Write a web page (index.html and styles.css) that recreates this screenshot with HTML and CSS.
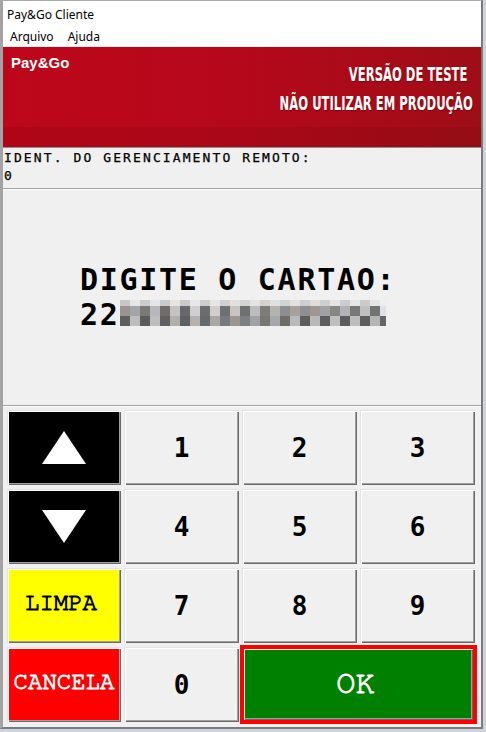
FILE: index.html
```html
<!DOCTYPE html>
<html lang="pt">
<head>
<meta charset="utf-8">
<title>Pay&amp;Go Cliente</title>
<link rel="stylesheet" href="styles.css">
</head>
<body>
<div class="window">
  <div class="titlebar">Pay&amp;Go Cliente</div>
  <div class="menubar"><span class="menu-item">Arquivo</span><span class="menu-item">Ajuda</span></div>
  <div class="banner">
    <div class="brand">Pay&amp;Go</div>
    <div class="warning">
      <div class="warn-line warn-1">VERSÃO DE TESTE</div>
      <div class="warn-line warn-2">NÃO UTILIZAR EM PRODUÇÃO</div>
    </div>
  </div>
  <div class="ident">
    <div>IDENT. DO GERENCIAMENTO REMOTO:</div>
    <div>0</div>
  </div>
  <div class="display">
    <div class="prompt">DIGITE O CARTAO:</div>
    <div class="prompt card">22<svg class="mosaic" width="266" height="26" viewBox="0 0 266 26">
      <g>
        <rect x="0" y="0" width="10" height="6" fill="#c9c6c4"/><rect x="10" y="0" width="10" height="6" fill="#e6e6e6"/>
        <rect x="20" y="0" width="10" height="6" fill="#cccccc"/><rect x="30" y="0" width="10" height="6" fill="#e4e5e7"/>
        <rect x="40" y="0" width="10" height="6" fill="#cbcbcb"/><rect x="50" y="0" width="10" height="6" fill="#e6e4e2"/>
        <rect x="60" y="0" width="10" height="6" fill="#cacaca"/><rect x="70" y="0" width="10" height="6" fill="#e8e8e8"/>
        <rect x="80" y="0" width="10" height="6" fill="#cdcdcd"/><rect x="90" y="0" width="10" height="6" fill="#e5e5e5"/>
        <rect x="100" y="0" width="10" height="6" fill="#d0d0d0"/><rect x="110" y="0" width="10" height="6" fill="#e2e0df"/>
        <rect x="120" y="0" width="10" height="6" fill="#d4d4d4"/><rect x="130" y="0" width="10" height="6" fill="#e3e3e3"/>
        <rect x="140" y="0" width="10" height="6" fill="#d4d2d0"/><rect x="150" y="0" width="10" height="6" fill="#e0e0e0"/>
        <rect x="160" y="0" width="10" height="6" fill="#d2d3d5"/><rect x="170" y="0" width="10" height="6" fill="#e3dfdc"/>
        <rect x="180" y="0" width="10" height="6" fill="#cfcfd1"/><rect x="190" y="0" width="10" height="6" fill="#e2dcd9"/>
        <rect x="200" y="0" width="10" height="6" fill="#cdcfd1"/><rect x="210" y="0" width="10" height="6" fill="#e4e4e4"/>
        <rect x="220" y="0" width="10" height="6" fill="#cccdcf"/><rect x="230" y="0" width="10" height="6" fill="#e6e6e6"/>
        <rect x="240" y="0" width="10" height="6" fill="#cbcbcb"/><rect x="250" y="0" width="10" height="6" fill="#e5e5e5"/>
        <rect x="260" y="0" width="6" height="6" fill="#eceef0"/>
      </g>
      <g>
        <rect x="0" y="6" width="10" height="10" fill="#9b938f"/><rect x="10" y="6" width="10" height="10" fill="#a2a5a9"/>
        <rect x="20" y="6" width="10" height="10" fill="#7b7876"/><rect x="30" y="6" width="10" height="10" fill="#b5b8bc"/>
        <rect x="40" y="6" width="10" height="10" fill="#6f6c6b"/><rect x="50" y="6" width="10" height="10" fill="#c5c3c1"/>
        <rect x="60" y="6" width="10" height="10" fill="#68686a"/><rect x="70" y="6" width="10" height="10" fill="#cfcfcf"/>
        <rect x="80" y="6" width="10" height="10" fill="#6b6c6f"/><rect x="90" y="6" width="10" height="10" fill="#d0cfce"/>
        <rect x="100" y="6" width="10" height="10" fill="#707074"/><rect x="110" y="6" width="10" height="10" fill="#c9c4c2"/>
        <rect x="120" y="6" width="10" height="10" fill="#6e7072"/><rect x="130" y="6" width="10" height="10" fill="#bdbdbd"/>
        <rect x="140" y="6" width="10" height="10" fill="#7e7c79"/><rect x="150" y="6" width="10" height="10" fill="#b5b3b0"/>
        <rect x="160" y="6" width="10" height="10" fill="#8d8e92"/><rect x="170" y="6" width="10" height="10" fill="#a8a09b"/>
        <rect x="180" y="6" width="10" height="10" fill="#8e8f93"/><rect x="190" y="6" width="10" height="10" fill="#a09590"/>
        <rect x="200" y="6" width="10" height="10" fill="#9fa3a7"/><rect x="210" y="6" width="10" height="10" fill="#888583"/>
        <rect x="220" y="6" width="10" height="10" fill="#b0b2b6"/><rect x="230" y="6" width="10" height="10" fill="#7a7877"/>
        <rect x="240" y="6" width="10" height="10" fill="#c0c0c0"/><rect x="250" y="6" width="10" height="10" fill="#737373"/>
        <rect x="260" y="6" width="6" height="10" fill="#dee2e6"/>
      </g>
      <g>
        <rect x="0" y="16" width="10" height="10" fill="#5f5f5f"/><rect x="10" y="16" width="10" height="10" fill="#bdbdbd"/>
        <rect x="20" y="16" width="10" height="10" fill="#5c5c5c"/><rect x="30" y="16" width="10" height="10" fill="#bdbdbd"/>
        <rect x="40" y="16" width="10" height="10" fill="#606062"/><rect x="50" y="16" width="10" height="10" fill="#b2aeaa"/>
        <rect x="60" y="16" width="10" height="10" fill="#5d6064"/><rect x="70" y="16" width="10" height="10" fill="#b5b1ae"/>
        <rect x="80" y="16" width="10" height="10" fill="#68696c"/><rect x="90" y="16" width="10" height="10" fill="#aba7a3"/>
        <rect x="100" y="16" width="10" height="10" fill="#777a7e"/><rect x="110" y="16" width="10" height="10" fill="#9c9590"/>
        <rect x="120" y="16" width="10" height="10" fill="#7e7f83"/><rect x="130" y="16" width="10" height="10" fill="#9fa2a7"/>
        <rect x="140" y="16" width="10" height="10" fill="#7a7672"/><rect x="150" y="16" width="10" height="10" fill="#a5a7ab"/>
        <rect x="160" y="16" width="10" height="10" fill="#6e6d6b"/><rect x="170" y="16" width="10" height="10" fill="#b7b9bc"/>
        <rect x="180" y="16" width="10" height="10" fill="#5f5e5d"/><rect x="190" y="16" width="10" height="10" fill="#b9b9b9"/>
        <rect x="200" y="16" width="10" height="10" fill="#5d5d5d"/><rect x="210" y="16" width="10" height="10" fill="#bfbfbf"/>
        <rect x="220" y="16" width="10" height="10" fill="#5c5c5c"/><rect x="230" y="16" width="10" height="10" fill="#bdbdbd"/>
        <rect x="240" y="16" width="10" height="10" fill="#5e5e5e"/><rect x="250" y="16" width="10" height="10" fill="#b5b5b5"/>
        <rect x="260" y="16" width="6" height="10" fill="#63666a"/>
      </g>
    </svg></div>
  </div>
  <div class="keypad">
    <div class="key key-dark"><svg width="44" height="33" viewBox="0 0 44 33"><polygon points="22,0 44,33 0,33" fill="#fff"/></svg></div>
    <div class="key">1</div>
    <div class="key">2</div>
    <div class="key">3</div>
    <div class="key key-dark"><svg width="44" height="33" viewBox="0 0 44 33"><polygon points="0,0 44,0 22,33" fill="#fff"/></svg></div>
    <div class="key">4</div>
    <div class="key">5</div>
    <div class="key">6</div>
    <div class="key key-word key-yellow">LIMPA</div>
    <div class="key">7</div>
    <div class="key">8</div>
    <div class="key">9</div>
    <div class="key key-word key-red">CANCELA</div>
    <div class="key">0</div>
    <div class="key key-word key-ok">OK</div>
  </div>
</div>
</body>
</html>
```

FILE: styles.css
```css
html, body {
  margin: 0;
  padding: 0;
}

body {
  background: #cdd4de;
  width: 486px;
  height: 732px;
  overflow: hidden;
}

.window {
  width: 478px;
  border-top: 1px solid #a9a9a9;
  border-left: 3px solid #a3a3a3;
  border-right: 2px solid #7b7b7b;
  border-bottom: 2px solid #7b7b7b;
  background: #f0f0f0;
}

.titlebar {
  height: 27px;
  line-height: 27px;
  padding-left: 4px;
  background: #fff;
  font-family: "Noto Sans", "Open Sans", sans-serif;
  font-size: 12px;
  color: #000;
}

.menubar {
  height: 18px;
  line-height: 18px;
  padding-left: 7px;
  background: #fff;
  border-bottom: 1px solid #f0f0f0;
  font-family: "Noto Sans", "Open Sans", sans-serif;
  font-size: 12px;
  color: #000;
  display: flex;
  gap: 14px;
}

.banner {
  height: 100px;
  display: flex;
  justify-content: space-between;
  align-items: flex-start;
  background:
    linear-gradient(to bottom, rgba(0, 0, 0, 0) 80px, rgba(60, 0, 0, 0.1) 80px),
    linear-gradient(to right, #bd0619 0%, #b7081b 45%, #a80b18 80%, #9e0e17 100%);
  border-bottom: 1px solid #8d8d8d;
}

.brand {
  padding: 8px 0 0 8px;
  font-family: "Liberation Sans", Arial, sans-serif;
  font-weight: bold;
  font-size: 15px;
  line-height: 15px;
  color: #fff;
}

.warning {
  padding: 13px 8px 0 0;
  display: flex;
  flex-direction: column;
  align-items: flex-end;
}

.warn-line {
  font-family: "DejaVu Sans", "Liberation Sans", sans-serif;
  font-weight: bold;
  font-size: 19px;
  line-height: 29px;
  color: #fff;
  white-space: nowrap;
  transform: scaleX(0.61);
  transform-origin: right center;
  text-shadow: 1px 1px 1px rgba(80, 0, 0, 0.5);
}

.warn-1 {
  margin-right: 6px;
}

.ident {
  height: 39px;
  padding: 1px 0 0 1px;
  border-bottom: 1px solid #a0a0a0;
  font-family: "DejaVu Sans Mono", "Liberation Mono", monospace;
  font-size: 13px;
  line-height: 18px;
  letter-spacing: 2.1px;
  color: #000;
  -webkit-text-stroke: 0.25px #000;
}

.display {
  height: 143px;
  padding: 72px 0 0 77px;
  border-top: 1px solid #fff;
  border-bottom: 1px solid #a0a0a0;
}

.prompt {
  font-family: "DejaVu Sans Mono", "Liberation Mono", monospace;
  font-weight: bold;
  font-size: 30px;
  line-height: 35px;
  letter-spacing: 1.7px;
  color: #000;
  white-space: nowrap;
}

.mosaic {
  display: inline-block;
  vertical-align: -1px;
}

.keypad {
  border-top: 1px solid #fff;
  padding: 3px 0 5px 4px;
  display: grid;
  grid-template-columns: 114px 115px 115px 115px;
  grid-template-rows: 75px 75px 75px 75px;
  column-gap: 3px;
  row-gap: 4px;
}

.key {
  display: flex;
  align-items: center;
  justify-content: center;
  background: #f0f0f0;
  box-shadow:
    inset 1px 1px #e3e3e3,
    inset 2px 2px #ffffff,
    inset -1px -1px #696969,
    inset -2px -2px #a0a0a0;
  font-family: "DejaVu Sans Mono", "Liberation Mono", monospace;
  font-weight: bold;
  font-size: 26px;
  color: #000;
}

.key-dark {
  background: #000;
}

.key-word {
  font-family: "Nimbus Mono PS", "Nimbus Mono L", "FreeMono", "DejaVu Serif", serif;
  font-weight: normal;
  font-size: 24px;
  padding-bottom: 5px;
  box-sizing: border-box;
  -webkit-text-stroke: 0.9px currentColor;
}

.key-yellow {
  background: #ffff00;
  color: #000;
  padding-right: 6px;
}

.key-red {
  background: #ff0000;
  color: #fff;
}

.key-ok {
  grid-column: span 2;
  background: #008000;
  color: #fff;
  font-size: 32px;
  padding-bottom: 3px;
  padding-right: 6px;
  border: 2px solid #ff0000;
  box-shadow:
    0 0 0 2px #ff0000,
    inset 1px 1px #e3e3e3,
    inset -1px -1px #696969,
    inset -2px -2px #a0a0a0;
}
```
